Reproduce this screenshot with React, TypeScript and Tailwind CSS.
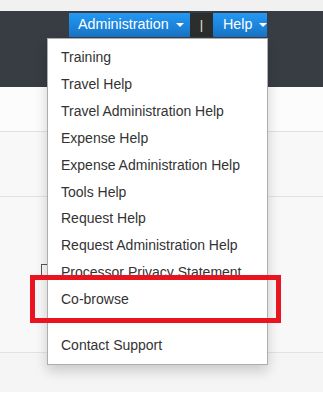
import React from "react";

const items = [
  "Training",
  "Travel Help",
  "Travel Administration Help",
  "Expense Help",
  "Expense Administration Help",
  "Tools Help",
  "Request Help",
  "Request Administration Help",
  "Processor Privacy Statement",
  "Co-browse",
];

function Caret() {
  return (
    <span className="ml-[7px] inline-block h-0 w-0 border-x-[4px] border-t-[4px] border-x-transparent border-t-white align-middle" />
  );
}

export default function App() {
  return (
    <div
      className="relative h-[400px] w-[323px] overflow-hidden bg-white"
      style={{ fontFamily: '"Liberation Sans", Arial, sans-serif' }}
    >
      <div className="h-[11px] bg-[#f1f1f1]" />
      <div className="flex h-[76px] items-start bg-[#383d44] pl-[69px] pt-[2px]">
        <div className="flex h-[24px] w-[121px] items-center bg-gradient-to-b from-[#2399f5] to-[#1873c6] pl-[9px] text-[14.3px] whitespace-nowrap text-white">
          Administration
          <Caret />
        </div>
        <div className="flex h-[24px] w-[23px] items-center justify-center bg-[#2c2d2d] text-[13px] text-[#e8e4dc]">
          |
        </div>
        <div className="flex h-[24px] w-[54px] items-center bg-gradient-to-b from-[#2399f5] to-[#1873c6] pl-[10px] text-[14.3px] text-white">
          Help
          <Caret />
        </div>
      </div>
      <div className="h-[45px] border-b border-[#e2e2e2] bg-[#fcfcfc]" />
      <div className="h-[65px] border-b border-[#e2e2e2] bg-[#f8f8f8]" />
      <div className="h-[156px] border-b border-[#e2e2e2] bg-[#f8f8f8] pl-[41px] pt-[67px]">
        <div className="h-[16px] w-[16px] border border-[#555]" />
      </div>
      <div className="h-[39px] bg-[#f5f5f5]" />

      <div className="absolute left-[47px] top-[38px] w-[221px] border border-[#adadad] bg-white py-[5px] text-[14px] text-[#333] shadow-[0_6px_12px_rgba(0,0,0,0.175)]">
        {items.map((t) => (
          <div key={t} className="px-[13px] leading-[26.9px] whitespace-nowrap">
            {t}
          </div>
        ))}
        <div className="my-[9px] h-px bg-[#e5e5e5]" />
        <div className="px-[13px] leading-[26.9px]">Contact Support</div>
      </div>

      <div className="absolute left-[30px] top-[275px] h-[48px] w-[251px] border-[5px] border-[#e8141f]" />
    </div>
  );
}
